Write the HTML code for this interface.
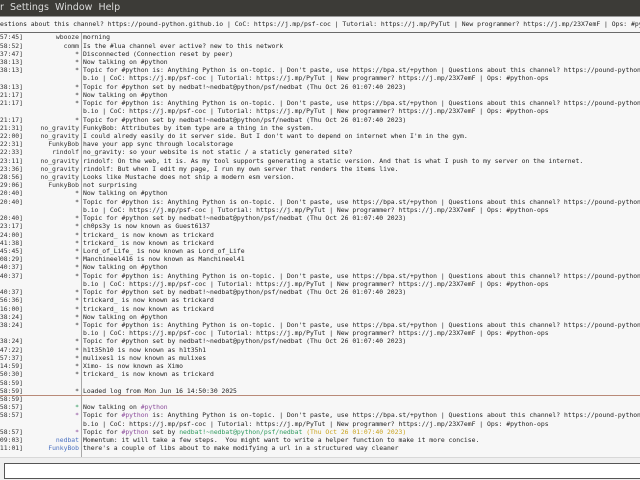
<!DOCTYPE html>
<html><head><meta charset="utf-8"><style>
*{margin:0;padding:0;box-sizing:border-box}
body{width:640px;height:480px;overflow:hidden;background:#efefef;position:relative;font-family:"DejaVu Sans Mono","Liberation Mono",monospace}
#menu{position:absolute;left:0;top:0;width:640px;height:16px;background:#3c3b37;color:#dcdcdc;font:9.5px "DejaVu Sans","Liberation Sans",sans-serif;line-height:16px;white-space:pre}
#topic{position:absolute;left:0;top:16px;width:640px;height:17px;background:#f6f6f6;border-top:1px solid #9a9a9a;border-bottom:1px solid #6a6a6a;font-size:6.4px;line-height:15px;color:#222;white-space:pre;overflow:hidden}
#main{position:absolute;left:0;top:33px;width:640px;height:425px;background:#f7f7f7;overflow:hidden;border-bottom:1px solid #d8d8d8}
#col{position:absolute;left:81px;top:0;width:1px;height:425px;background:#a8a8a8}
.l{position:absolute;left:0;height:8.22px;width:640px;font-size:6.4px;line-height:8.22px;white-space:pre;color:#222}
.t{position:absolute;right:617px;top:0;color:#333}
.n{position:absolute;right:561px;top:0;color:#333}
.m{position:absolute;left:83px;top:0;color:#222}
.g{color:#2e9a5e}
.p{color:#8a4a9a}
.y{color:#c9a21c}
.b{color:#4a70c0}
#sep{position:absolute;left:0;top:361.5px;width:640px;height:1px;background:#b98a78}
#input{position:absolute;left:4px;top:463px;width:640px;height:16px;background:#fff;border:1px solid #555;border-right:none}
</style></head><body>
<div id="menu">r  Settings  Window  Help</div>
<div id="topic">estions about this channel? https://pound-python.github.io | CoC: https://j.mp/psf-coc | Tutorial: https://j.mp/PyTut | New programmer? https://j.mp/23X7emF | Ops: #python-ops</div>
<div id="main">
<div id="col"></div>
<div id="sep"></div>
<div class="l" style="top:0.3px"><span class="t">57:45]</span><span class="n">wbooze</span><span class="m">morning</span></div>
<div class="l" style="top:8.52px"><span class="t">58:52]</span><span class="n">comm</span><span class="m">Is the #lua channel ever active? new to this network</span></div>
<div class="l" style="top:16.74px"><span class="t">37:47]</span><span class="n">*</span><span class="m">Disconnected (Connection reset by peer)</span></div>
<div class="l" style="top:24.96px"><span class="t">38:13]</span><span class="n">*</span><span class="m">Now talking on #python</span></div>
<div class="l" style="top:33.18px"><span class="t">38:13]</span><span class="n">*</span><span class="m">Topic for #python is: Anything Python is on-topic. | Don't paste, use https://bpa.st/+python | Questions about this channel? https://pound-python</span></div>
<div class="l" style="top:41.4px"><span class="m">b.io | CoC: https://j.mp/psf-coc | Tutorial: https://j.mp/PyTut | New programmer? https://j.mp/23X7emF | Ops: #python-ops</span></div>
<div class="l" style="top:49.62px"><span class="t">38:13]</span><span class="n">*</span><span class="m">Topic for #python set by nedbat!~nedbat@python/psf/nedbat (Thu Oct 26 01:07:40 2023)</span></div>
<div class="l" style="top:57.84px"><span class="t">21:17]</span><span class="n">*</span><span class="m">Now talking on #python</span></div>
<div class="l" style="top:66.06px"><span class="t">21:17]</span><span class="n">*</span><span class="m">Topic for #python is: Anything Python is on-topic. | Don't paste, use https://bpa.st/+python | Questions about this channel? https://pound-python</span></div>
<div class="l" style="top:74.28px"><span class="m">b.io | CoC: https://j.mp/psf-coc | Tutorial: https://j.mp/PyTut | New programmer? https://j.mp/23X7emF | Ops: #python-ops</span></div>
<div class="l" style="top:82.5px"><span class="t">21:17]</span><span class="n">*</span><span class="m">Topic for #python set by nedbat!~nedbat@python/psf/nedbat (Thu Oct 26 01:07:40 2023)</span></div>
<div class="l" style="top:90.72px"><span class="t">21:31]</span><span class="n">no_gravity</span><span class="m">FunkyBob: Attributes by item type are a thing in the system.</span></div>
<div class="l" style="top:98.94px"><span class="t">22:00]</span><span class="n">no_gravity</span><span class="m">I could alredy easily do it server side. But I don't want to depend on internet when I'm in the gym.</span></div>
<div class="l" style="top:107.16px"><span class="t">22:31]</span><span class="n">FunkyBob</span><span class="m">have your app sync through localstorage</span></div>
<div class="l" style="top:115.38px"><span class="t">22:33]</span><span class="n">rindolf</span><span class="m">no_gravity: so your website is not static / a staticly generated site?</span></div>
<div class="l" style="top:123.6px"><span class="t">23:11]</span><span class="n">no_gravity</span><span class="m">rindolf: On the web, it is. As my tool supports generating a static version. And that is what I push to my server on the internet.</span></div>
<div class="l" style="top:131.82px"><span class="t">23:36]</span><span class="n">no_gravity</span><span class="m">rindolf: But when I edit my page, I run my own server that renders the items live.</span></div>
<div class="l" style="top:140.04px"><span class="t">28:56]</span><span class="n">no_gravity</span><span class="m">Looks like Mustache does not ship a modern esm version.</span></div>
<div class="l" style="top:148.26px"><span class="t">29:06]</span><span class="n">FunkyBob</span><span class="m">not surprising</span></div>
<div class="l" style="top:156.48px"><span class="t">20:40]</span><span class="n">*</span><span class="m">Now talking on #python</span></div>
<div class="l" style="top:164.7px"><span class="t">20:40]</span><span class="n">*</span><span class="m">Topic for #python is: Anything Python is on-topic. | Don't paste, use https://bpa.st/+python | Questions about this channel? https://pound-python</span></div>
<div class="l" style="top:172.92px"><span class="m">b.io | CoC: https://j.mp/psf-coc | Tutorial: https://j.mp/PyTut | New programmer? https://j.mp/23X7emF | Ops: #python-ops</span></div>
<div class="l" style="top:181.14px"><span class="t">20:40]</span><span class="n">*</span><span class="m">Topic for #python set by nedbat!~nedbat@python/psf/nedbat (Thu Oct 26 01:07:40 2023)</span></div>
<div class="l" style="top:189.36px"><span class="t">23:17]</span><span class="n">*</span><span class="m">ch0ps3y is now known as Guest6137</span></div>
<div class="l" style="top:197.58px"><span class="t">24:00]</span><span class="n">*</span><span class="m">trickard_ is now known as trickard</span></div>
<div class="l" style="top:205.8px"><span class="t">41:38]</span><span class="n">*</span><span class="m">trickard_ is now known as trickard</span></div>
<div class="l" style="top:214.02px"><span class="t">45:45]</span><span class="n">*</span><span class="m">Lord_of_Life_ is now known as Lord_of_Life</span></div>
<div class="l" style="top:222.24px"><span class="t">08:29]</span><span class="n">*</span><span class="m">Manchineel416 is now known as Manchineel41</span></div>
<div class="l" style="top:230.46px"><span class="t">40:37]</span><span class="n">*</span><span class="m">Now talking on #python</span></div>
<div class="l" style="top:238.68px"><span class="t">40:37]</span><span class="n">*</span><span class="m">Topic for #python is: Anything Python is on-topic. | Don't paste, use https://bpa.st/+python | Questions about this channel? https://pound-python</span></div>
<div class="l" style="top:246.9px"><span class="m">b.io | CoC: https://j.mp/psf-coc | Tutorial: https://j.mp/PyTut | New programmer? https://j.mp/23X7emF | Ops: #python-ops</span></div>
<div class="l" style="top:255.12px"><span class="t">40:37]</span><span class="n">*</span><span class="m">Topic for #python set by nedbat!~nedbat@python/psf/nedbat (Thu Oct 26 01:07:40 2023)</span></div>
<div class="l" style="top:263.34px"><span class="t">56:36]</span><span class="n">*</span><span class="m">trickard_ is now known as trickard</span></div>
<div class="l" style="top:271.56px"><span class="t">16:00]</span><span class="n">*</span><span class="m">trickard_ is now known as trickard</span></div>
<div class="l" style="top:279.78px"><span class="t">38:24]</span><span class="n">*</span><span class="m">Now talking on #python</span></div>
<div class="l" style="top:288px"><span class="t">38:24]</span><span class="n">*</span><span class="m">Topic for #python is: Anything Python is on-topic. | Don't paste, use https://bpa.st/+python | Questions about this channel? https://pound-python</span></div>
<div class="l" style="top:296.22px"><span class="m">b.io | CoC: https://j.mp/psf-coc | Tutorial: https://j.mp/PyTut | New programmer? https://j.mp/23X7emF | Ops: #python-ops</span></div>
<div class="l" style="top:304.44px"><span class="t">38:24]</span><span class="n">*</span><span class="m">Topic for #python set by nedbat!~nedbat@python/psf/nedbat (Thu Oct 26 01:07:40 2023)</span></div>
<div class="l" style="top:312.66px"><span class="t">47:22]</span><span class="n">*</span><span class="m">h1t35h10 is now known as h1t35h1</span></div>
<div class="l" style="top:320.88px"><span class="t">57:37]</span><span class="n">*</span><span class="m">mulixes1 is now known as mulixes</span></div>
<div class="l" style="top:329.1px"><span class="t">14:59]</span><span class="n">*</span><span class="m">Ximo- is now known as Ximo</span></div>
<div class="l" style="top:337.32px"><span class="t">50:30]</span><span class="n">*</span><span class="m">trickard_ is now known as trickard</span></div>
<div class="l" style="top:345.54px"><span class="t">58:59]</span></div>
<div class="l" style="top:353.76px"><span class="t">58:59]</span><span class="n">*</span><span class="m">Loaded log from Mon Jun 16 14:50:30 2025</span></div>
<div class="l" style="top:361.98px"><span class="t">58:59]</span></div>
<div class="l" style="top:370.2px"><span class="t">58:57]</span><span class="n g">*</span><span class="m">Now talking on <span class="p">#python</span></span></div>
<div class="l" style="top:378.42px"><span class="t">58:57]</span><span class="n p">*</span><span class="m">Topic for <span class="p">#python</span> is: Anything Python is on-topic. | Don't paste, use https://bpa.st/+python | Questions about this channel? https://pound-python</span></div>
<div class="l" style="top:386.64px"><span class="m">b.io | CoC: https://j.mp/psf-coc | Tutorial: https://j.mp/PyTut | New programmer? https://j.mp/23X7emF | Ops: #python-ops</span></div>
<div class="l" style="top:394.86px"><span class="t">58:57]</span><span class="n p">*</span><span class="m">Topic for <span class="p">#python</span> set by <span class="g">nedbat!~nedbat@python/psf/nedbat</span> <span class="y">(Thu Oct 26 01:07:40 2023)</span></span></div>
<div class="l" style="top:403.08px"><span class="t">09:03]</span><span class="n b">nedbat</span><span class="m">Momentum: it will take a few steps.  You might want to write a helper function to make it more concise.</span></div>
<div class="l" style="top:411.3px"><span class="t">11:01]</span><span class="n b">FunkyBob</span><span class="m">there's a couple of libs about to make modifying a url in a structured way cleaner</span></div>
</div>
<div id="input"></div>
</body></html>
